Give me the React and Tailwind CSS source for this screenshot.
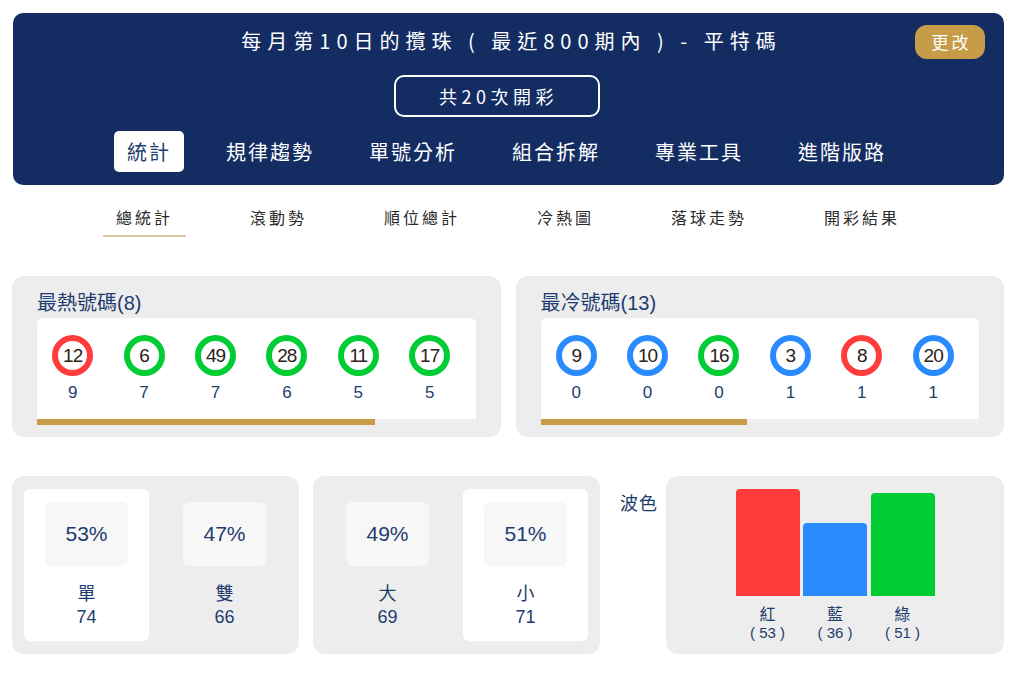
import React from "react"

const navItems = ["統計", "規律趨勢", "單號分析", "組合拆解", "專業工具", "進階版路"]
const subItems = ["總統計", "滾動勢", "順位總計", "冷熱圖", "落球走勢", "開彩結果"]

const ringColor = {
  red: "border-[#ff3d3d]",
  green: "border-[#00cc33]",
  blue: "border-[#2a8bff]",
}

const hot = [
  { n: 12, c: "red", v: 9 },
  { n: 6, c: "green", v: 7 },
  { n: 49, c: "green", v: 7 },
  { n: 28, c: "green", v: 6 },
  { n: 11, c: "green", v: 5 },
  { n: 17, c: "green", v: 5 },
]

const cold = [
  { n: 9, c: "blue", v: 0 },
  { n: 10, c: "blue", v: 0 },
  { n: 16, c: "green", v: 0 },
  { n: 3, c: "blue", v: 1 },
  { n: 8, c: "red", v: 1 },
  { n: 20, c: "blue", v: 1 },
]

const cjk = "font-['Noto_Sans_CJK_TC','Noto_Sans',sans-serif]"
const num = "font-['Liberation_Sans','Noto_Sans_CJK_TC',sans-serif]"

function Ball({ n, c, v }) {
  return (
    <div className="w-[71.4px] shrink-0 flex flex-col items-center">
      <div className={`w-[41px] h-[41px] rounded-full border-[6px] bg-white grid place-items-center ${ringColor[c]}`}>
        <span className={`${num} text-[19px] leading-none text-[#2a2118] tracking-[-1px]`}>{n}</span>
      </div>
      <div className={`${num} mt-[6px] text-[17px] leading-[22px] text-[#1e3c6e]`}>{v}</div>
    </div>
  )
}

function BallPanel({ title, items, fill }) {
  return (
    <section className="flex-1 bg-[#ededed] rounded-[12px] px-[25px] pt-[14px] pb-[12px]">
      <h2 className={`${num} text-[20px] leading-[27px] text-[#1e3c6e]`}>{title}</h2>
      <div className="mt-[1px] bg-white rounded-t-[6px] overflow-hidden">
        <div className="flex pt-[17px]">
          {items.map((b) => (
            <Ball key={b.n} {...b} />
          ))}
        </div>
        <div className="mt-[15px] h-[6px] bg-[#efefef]">
          <div className="h-full bg-[#c69c48]" style={{ width: fill }} />
        </div>
      </div>
    </section>
  )
}

function StatCard({ pct, label, count, active }) {
  return (
    <div className={`w-[125px] h-[152px] rounded-[6px] flex flex-col items-center pt-[13px] ${active ? "bg-white" : ""}`}>
      <div className={`${num} w-[83px] h-[64px] rounded-[6px] bg-[#f7f7f7] grid place-items-center text-[21px] text-[#1e3c6e]`}>
        {pct}
      </div>
      <div className={`${cjk} mt-[14px] text-[18px] leading-[24px] text-[#1e3c6e]`}>{label}</div>
      <div className={`${num} mt-[2px] text-[18px] leading-[22px] text-[#1e3c6e]`}>{count}</div>
    </div>
  )
}

function StatPanel({ children }) {
  return (
    <section className="w-[287px] h-[178px] bg-[#ededed] rounded-[12px] p-[12px] pt-[13px] flex gap-[13px]">
      {children}
    </section>
  )
}

const bars = [
  { label: "紅", v: 53, h: "h-[107px]", bg: "bg-[#ff3a3b]" },
  { label: "藍", v: 36, h: "h-[73px]", bg: "bg-[#2a8bff]" },
  { label: "綠", v: 51, h: "h-[103px]", bg: "bg-[#00cc33]" },
]

export default function App() {
  return (
    <div className="min-h-screen bg-white">
      <div className="ml-[12px] w-[992px] pt-[13px] pb-[20px]">
        <header className="relative ml-[1px] bg-[#132d63] rounded-[10px] pt-[14px] pb-[13px] flex flex-col items-center">
          <h1 className={`${cjk} text-white text-[20px] leading-[28px] tracking-[6px] pl-[6px]`}>
            每月第10日的攬珠 ( 最近800期內 ) - 平特碼
          </h1>
          <button className={`${cjk} absolute right-[19px] top-[12px] w-[70px] h-[34px] rounded-[12px] bg-[#c69c48] text-white text-[17px] tracking-[3px] pl-[3px]`}>
            更改
          </button>
          <div className={`${cjk} mt-[20px] mr-[24px] w-[206px] h-[42px] rounded-[10px] border-2 border-white grid place-items-center text-white text-[18px] tracking-[4.5px] pl-[4px]`}>
            共20次開彩
          </div>
          <nav className="mt-[14px] flex gap-[29px] mr-[4px]">
            {navItems.map((t, i) => (
              <div
                key={t}
                className={`${cjk} h-[41px] px-[13px] rounded-[5px] flex items-center text-[20px] tracking-[2px] ${
                  i === 0 ? "bg-white text-[#1e3c6e]" : "text-white"
                }`}
              >
                {t}
              </div>
            ))}
          </nav>
        </header>

        <div className="mt-[18px] flex justify-center gap-[51px]">
          {subItems.map((t, i) => (
            <div
              key={t}
              className={`${cjk} px-[13px] pt-[2px] pb-[6px] text-[16px] leading-[24px] tracking-[3px] text-[#2b2b2b] border-b-2 ${
                i === 0 ? "border-[#dccba2]" : "border-transparent"
              }`}
            >
              {t}
            </div>
          ))}
        </div>

        <div className="mt-[39px] flex gap-[15px]">
          <BallPanel title="最熱號碼(8)" items={hot} fill="77%" />
          <BallPanel title="最冷號碼(13)" items={cold} fill="47%" />
        </div>

        <div className="mt-[39px] flex">
          <StatPanel>
            <StatCard pct="53%" label="單" count="74" active />
            <StatCard pct="47%" label="雙" count="66" />
          </StatPanel>
          <div className="ml-[14px]">
            <StatPanel>
              <StatCard pct="49%" label="大" count="69" />
              <StatCard pct="51%" label="小" count="71" active />
            </StatPanel>
          </div>
          <div className={`${cjk} ml-[20px] mt-[13px] text-[18px] leading-[26px] tracking-[1px] text-[#1e3c6e]`}>波色</div>
          <section className="ml-[8px] flex-1 h-[178px] bg-[#ededed] rounded-[12px] pt-[13px] flex justify-center gap-[3.5px]">
            {bars.map((b) => (
              <div key={b.label} className="w-[64px] flex flex-col items-center">
                <div className="h-[107px] w-full flex items-end">
                  <div className={`w-full ${b.h} ${b.bg} rounded-t-[4px]`} />
                </div>
                <div className={`${cjk} mt-[7px] text-[16px] leading-[20px] text-[#1e3c6e]`}>{b.label}</div>
                <div className={`${num} text-[15px] leading-[20px] text-[#1e3c6e] whitespace-pre`}>{`( ${b.v} )`}</div>
              </div>
            ))}
          </section>
        </div>
      </div>
    </div>
  )
}
